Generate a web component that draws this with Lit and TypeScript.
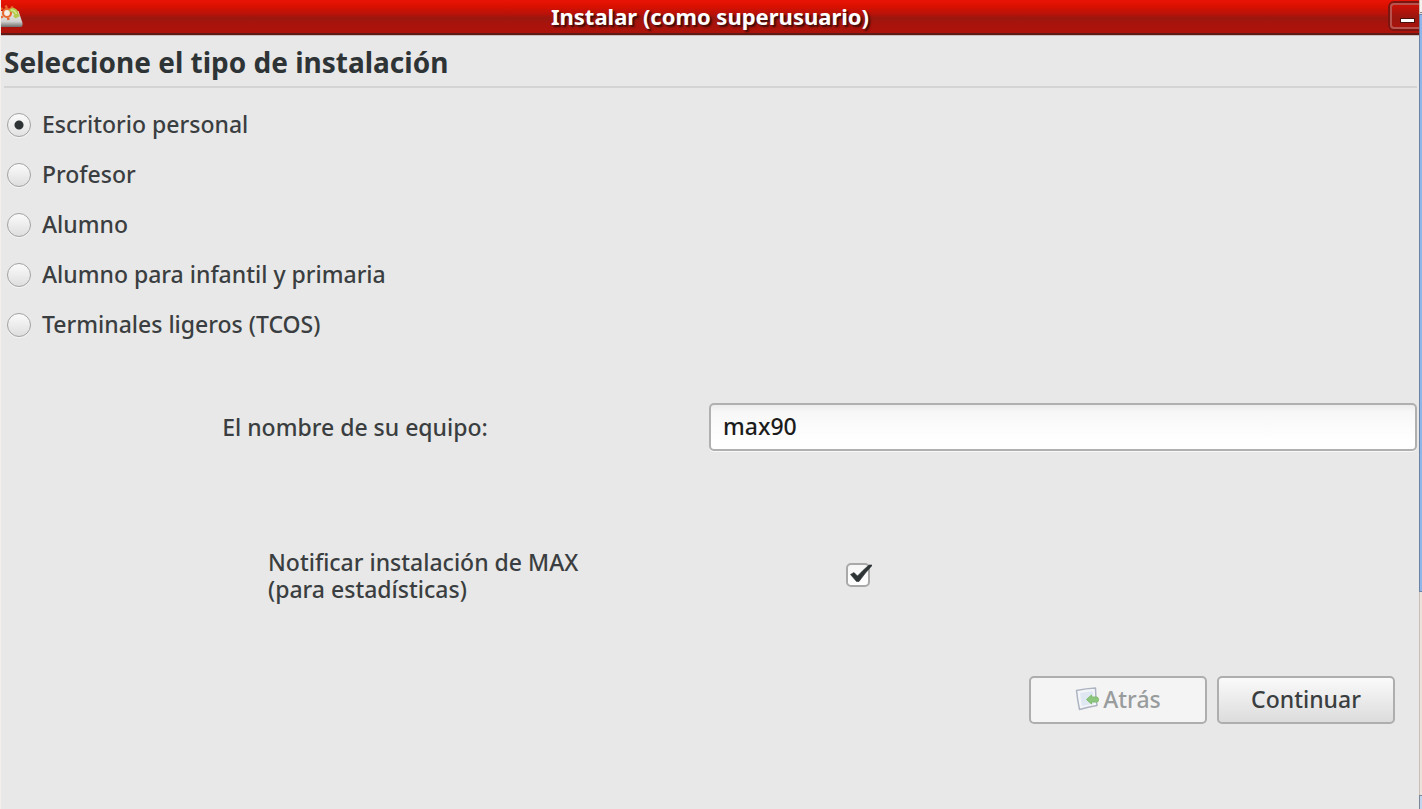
import { LitElement, html, css, svg } from "lit";
import { customElement, state } from "lit/decorators.js";

const TYPES = [
  "Escritorio personal",
  "Profesor",
  "Alumno",
  "Alumno para infantil y primaria",
  "Terminales ligeros (TCOS)",
];

@customElement("app-root")
export class AppRoot extends LitElement {
  @state() private selected = 0;

  static styles = css`
    :host {
      display: flex;
      min-height: 100vh;
      box-sizing: border-box;
      padding-left: 1px;
      background: #f3efea;
      color: #3a3e40;
      font: 500 23px/28px "Noto Sans", "Open Sans", sans-serif;
    }
    * {
      box-sizing: border-box;
    }
    .window {
      flex: 1;
      min-width: 0;
      background: #e8e8e8;
    }
    .titlebar {
      display: flex;
      align-items: center;
      height: 35px;
      padding-bottom: 2px;
      border-bottom: 2px solid #5e1a16;
      background: linear-gradient(#ea1405, #da1000 18%, #b91209 42%, #9b170f 54%, #a9130b 75%, #ad130b);
      box-shadow: 0 1px 0 #c9bcba;
    }
    .side {
      flex: 1;
      display: flex;
      align-items: center;
    }
    .side.end {
      justify-content: flex-end;
    }
    .disk {
      width: 22px;
      height: 24px;
    }
    .caption {
      margin: 0;
      font-size: 22px;
      line-height: 32px;
      font-weight: 700;
      color: #fff;
      text-shadow: 2px 2px 2px #3a0a08;
    }
    .minimize {
      display: flex;
      align-items: flex-end;
      width: 29px;
      height: 26px;
      padding: 0 0 5px 9px;
      border: 2px solid #b8524c;
      border-right: 0;
      border-radius: 4px 0 0 4px;
      background: linear-gradient(#cc1107, #9a170f 55%, #a8140c);
      box-shadow: 0 0 0 2px #7c1410;
    }
    .dash {
      width: 13px;
      height: 3px;
      background: #fff;
      box-shadow: 0 0 0 1px #4d0f0c;
    }
    .heading {
      margin: 0 2px 0 3px;
      padding: 9px 0 8px;
      height: 53px;
      border-bottom: 2px solid #d4d4d4;
      font-size: 28px;
      line-height: 36px;
      font-weight: 700;
      color: #2e3436;
    }
    .types {
      margin: 0;
      padding: 12px 0 0 6px;
      border: 0;
    }
    .type {
      display: flex;
      align-items: center;
      gap: 11px;
      height: 50px;
    }
    .type-text {
      padding-bottom: 3px;
    }
    .radio {
      appearance: none;
      flex: none;
      width: 24px;
      height: 24px;
      margin: 0;
      border: 1px solid #a2a2a2;
      border-radius: 50%;
      background: linear-gradient(#fbfbfb, #dedede);
      box-shadow: 0 1px 0 #f6f6f6;
    }
    .radio:checked {
      background: radial-gradient(circle, #2e3436 4px, transparent 5px), linear-gradient(#fbfbfb, #e2e2e2);
    }
    .row {
      display: grid;
      grid-template-columns: 1fr 1fr;
      align-items: center;
      margin-right: 2px;
    }
    .name {
      margin-top: 53px;
    }
    .name-label {
      justify-self: center;
    }
    .field {
      width: 100%;
      height: 48px;
      padding: 0 12px 2px;
      border: 2px solid #b0b0b0;
      border-radius: 5px;
      background: linear-gradient(#ececec, #f7f7f7 15%, #fff 80%);
      box-shadow: 0 1px 0 #f8f8f8;
      color: #1c1c1c;
      font: inherit;
    }
    .notify {
      grid-template-columns: 3fr 2fr;
      margin-top: 98px;
    }
    .notify-label {
      padding-left: 267px;
      line-height: 27px;
    }
    .check {
      appearance: none;
      width: 24px;
      height: 24px;
      margin: 0;
      border: 2px solid #a9a9a9;
      border-radius: 5px;
      background: linear-gradient(#f6f6f6, #fff);
    }
    .tick-box {
      position: relative;
      display: flex;
      width: 26px;
      margin: 0 0 2px -5px;
    }
    .tick {
      position: absolute;
      left: 0;
      top: 0;
      width: 26px;
      height: 24px;
      pointer-events: none;
      visibility: hidden;
    }
    .check:checked + .tick {
      visibility: visible;
    }
    .actions {
      display: flex;
      justify-content: flex-end;
      gap: 10px;
      padding: 73px 24px 0 0;
    }
    .button {
      display: flex;
      align-items: center;
      justify-content: center;
      gap: 4px;
      width: 178px;
      height: 48px;
      padding: 0 0 2px;
      border: 2px solid #aeaeae;
      border-radius: 5px;
      background: linear-gradient(#fafafa, #dcdcdc);
      color: #3a3e40;
      font: inherit;
    }
    .button:disabled {
      background: #f4f4f4;
      color: #999c9d;
    }
    .back-icon {
      width: 24px;
      height: 24px;
    }
    .scroll {
      flex: none;
      display: flex;
      flex-direction: column;
      width: 3px;
      background: #ece4dc;
      border-left: 1px solid #c9bdb5;
    }
    .cap {
      height: 13px;
      border-bottom: 1px solid #8e8a86;
      background: #f4f2ee;
    }
    .thumb {
      flex: 37;
      margin: 1px 0 0 -1px;
      border: 1px solid #6c83a6;
      border-right: 0;
      background: #8fb6ea;
    }
    .track {
      flex: 13;
    }
    .arrow {
      height: 14px;
      margin-left: -1px;
      border: 1px solid #7b8796;
      border-width: 1px 0 0 1px;
      background: #c4d6ee;
    }
  `;

  private diskIcon() {
    return svg`<svg class="disk" viewBox="0 0 22 24" aria-hidden="true">
      <defs>
        <linearGradient id="tray" x1="0" y1="0" x2="0" y2="1">
          <stop offset="0" stop-color="#e9e7e4"/>
          <stop offset="0.650" stop-color="#d2d2d0"/>
          <stop offset="1" stop-color="#6f6f6d"/>
        </linearGradient>
      </defs>
      <path d="M0 7 H17.500 L21.500 19 V21 Q21.500 23 19.500 23 H0Z" fill="url(#tray)"/>
      <circle cx="6" cy="9" r="4" fill="#f6efe6" stroke="#e8682f" stroke-width="2.200"/>
      <path d="M1.500 5.500 L0 4 M6 4 L4.500 1.500 M9 5.500 L12 2.500 M2 12.500 L0 13.500 M7 13.500 L7.500 16" stroke="#e8682f" stroke-width="2.400"/>
      <path d="M7.500 7 Q9 3.500 13 4 Q17.500 5.500 17.500 10 L19 12 L14.500 14.500 L12 12 L13.500 11 Q12 8 7.500 7Z" fill="#b3ca4c"/>
      <path d="M10 6 Q14 6 15.500 10" fill="none" stroke="#d6e38e" stroke-width="1.500"/>
    </svg>`;
  }

  private backIcon() {
    return svg`<svg class="back-icon" viewBox="0 0 24 24" aria-hidden="true">
      <path d="M1.500 3.500 Q11 1.500 20.500 1 Q20.500 10 22 18.500 Q13 20 4.500 22.500 Q2.500 13 1.500 3.500Z" fill="#f3f5f9" stroke="#adb3c1" stroke-width="1.500" stroke-linejoin="round"/>
      <path d="M5 6 L18 4 L19 16.500 L7 19Z" fill="#dfe7f3"/>
      <path d="M11.500 12.500 L16.500 8 V10 H22 Q23.500 10.500 23.500 12.500 Q23.500 15 22 15 H16.500 V17Z" fill="#8cc67c" stroke="#80bb70" stroke-width="1" stroke-linejoin="round"/>
    </svg>`;
  }

  render() {
    return html`
      <main class="window">
        <header class="titlebar">
          <div class="side">${this.diskIcon()}</div>
          <p class="caption">Instalar (como superusuario)</p>
          <div class="side end">
            <button class="minimize" aria-label="Minimizar"><span class="dash"></span></button>
          </div>
        </header>
        <h1 class="heading">Seleccione el tipo de instalación</h1>
        <fieldset class="types" aria-label="Tipo de instalación">
          ${TYPES.map(
            (text, i) => html`<label class="type">
              <input class="radio" type="radio" name="type" .checked=${this.selected === i} @change=${() => (this.selected = i)} />
              <span class="type-text">${text}</span>
            </label>`
          )}
        </fieldset>
        <div class="row name">
          <label class="name-label" for="host">El nombre de su equipo:</label>
          <input class="field" id="host" type="text" value="max90" />
        </div>
        <div class="row notify">
          <label class="notify-label" for="notify">Notificar instalación de MAX<br />(para estadísticas)</label>
          <span class="tick-box">
            <input class="check" id="notify" type="checkbox" checked />
            <svg class="tick" viewBox="0 0 26 24" aria-hidden="true">
              <path d="M4.500 11.500 L8 9.500 L11.500 13 Q17 7 23 2 H26.500 Q19 10 13 18.500 H10.500 Z" fill="#2e3436" stroke="#2e3436" stroke-width="0.600"/>
            </svg>
          </span>
        </div>
        <div class="actions">
          <button class="button" disabled>${this.backIcon()}<span>Atrás</span></button>
          <button class="button">Continuar</button>
        </div>
      </main>
      <div class="scroll" aria-hidden="true">
        <div class="cap"></div>
        <div class="thumb"></div>
        <div class="track"></div>
        <div class="arrow"></div>
      </div>
    `;
  }
}
